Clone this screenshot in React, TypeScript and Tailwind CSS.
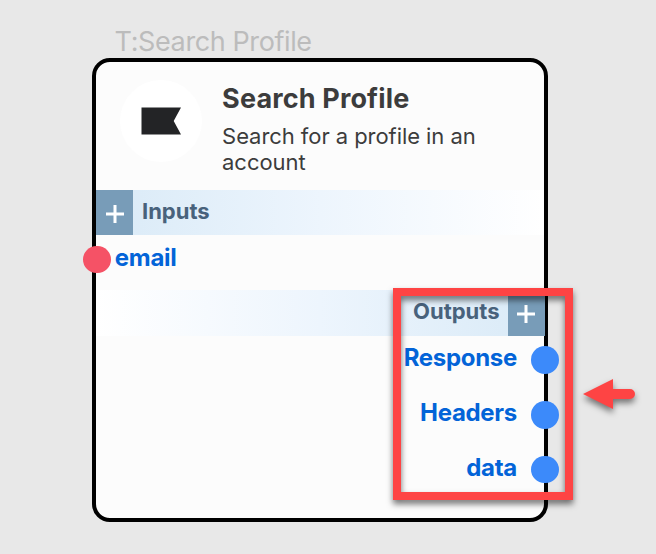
const outputs = ["Response", "Headers", "data"];

function Port({ color }: { color: string }) {
  return <span className={`block h-[27.5px] w-[27.5px] shrink-0 rounded-full ${color}`} />;
}

function AddButton() {
  return (
    <button className="flex h-full w-[36.7px] shrink-0 items-center justify-center bg-[#789cb8]" aria-label="Add">
      <svg width="18" height="18" viewBox="0 0 18 18" className="mt-[3px]">
        <path d="M9 0V18M0 9H18" stroke="#fff" strokeWidth="3" />
      </svg>
    </button>
  );
}

export default function App() {
  return (
    <main className="relative h-[554px] w-[656px] overflow-hidden bg-[#e8e8e8] pl-[92.3px] pt-[26px] font-['Inter',sans-serif]">
      <div className="h-[32.4px] pl-[22.3px] text-[27px] leading-[32px] tracking-[-0.4px] whitespace-nowrap text-[#bcbcbc]">T:Search Profile</div>
      <section className="flex h-[463.3px] w-[455.7px] flex-col rounded-[18px] border-4 border-black bg-[#fcfcfc]">
        <header className="flex h-[127.6px] shrink-0 pl-[23.4px] pt-[18px]">
          <div className="flex h-[82px] w-[82px] shrink-0 items-center justify-center rounded-full bg-white">
            <svg width="40" height="28" viewBox="0 0 40 28">
              <path d="M0.5 0.5H40L32.7 14L40 27.5H0.5Z" fill="#232426" />
            </svg>
          </div>
          <div className="ml-[20.4px] text-[#3c3c3c]">
            <h1 className="h-[43px] text-[27px] leading-[38px] font-bold tracking-[0.15px] whitespace-nowrap">Search Profile</h1>
            <p className="w-[290px] text-[22px] leading-[26px] tracking-[-0.06px]">Search for a profile in an<br />account</p>
          </div>
        </header>
        <div className="flex h-[45.4px] shrink-0 bg-linear-to-r from-[#d9eaf7] via-[#edf5fd] to-white">
          <AddButton />
          <span className="ml-[9px] text-[22px] leading-[42px] font-bold text-[#48627c]">Inputs</span>
        </div>
        <div className="-ml-[13px] flex h-[54.8px] shrink-0 pt-[10.5px]">
          <Port color="bg-[#f55266]" />
          <span className="ml-[4px] text-[24px] leading-[24px] font-bold tracking-[-0.3px] text-[#0364d8]">email</span>
        </div>
        <div className="-mr-[0.8px] flex h-[45.6px] shrink-0 justify-end bg-linear-to-l from-[#d9eaf7] via-[#edf5fd] to-white">
          <span className="mr-[8.6px] text-[22px] leading-[42px] font-bold text-[#48627c]">Outputs</span>
          <AddButton />
        </div>
        {outputs.map((name) => (
          <div key={name} className="-mr-[15px] flex h-[54.6px] shrink-0 justify-end pt-[10.7px]">
            <span className="mr-[14.5px] text-[24px] leading-[24px] font-bold tracking-[-0.3px] text-[#0364d8]">{name}</span>
            <Port color="bg-[#3c8afa]" />
          </div>
        ))}
      </section>
      <div className="absolute left-[393px] top-[288px] h-[212px] w-[180px] border-8 border-[#fe4444] [filter:drop-shadow(0_4px_3px_rgba(0,0,0,0.55))]" />
      <svg width="80" height="60" viewBox="0 0 80 60" className="absolute left-[570px] top-[365px] [filter:drop-shadow(0_4px_3px_rgba(0,0,0,0.5))]">
        <path d="M13 29L43 14V24H60A5 5 0 0 1 60 34H43V44Z" fill="#fe4444" />
      </svg>
    </main>
  );
}
